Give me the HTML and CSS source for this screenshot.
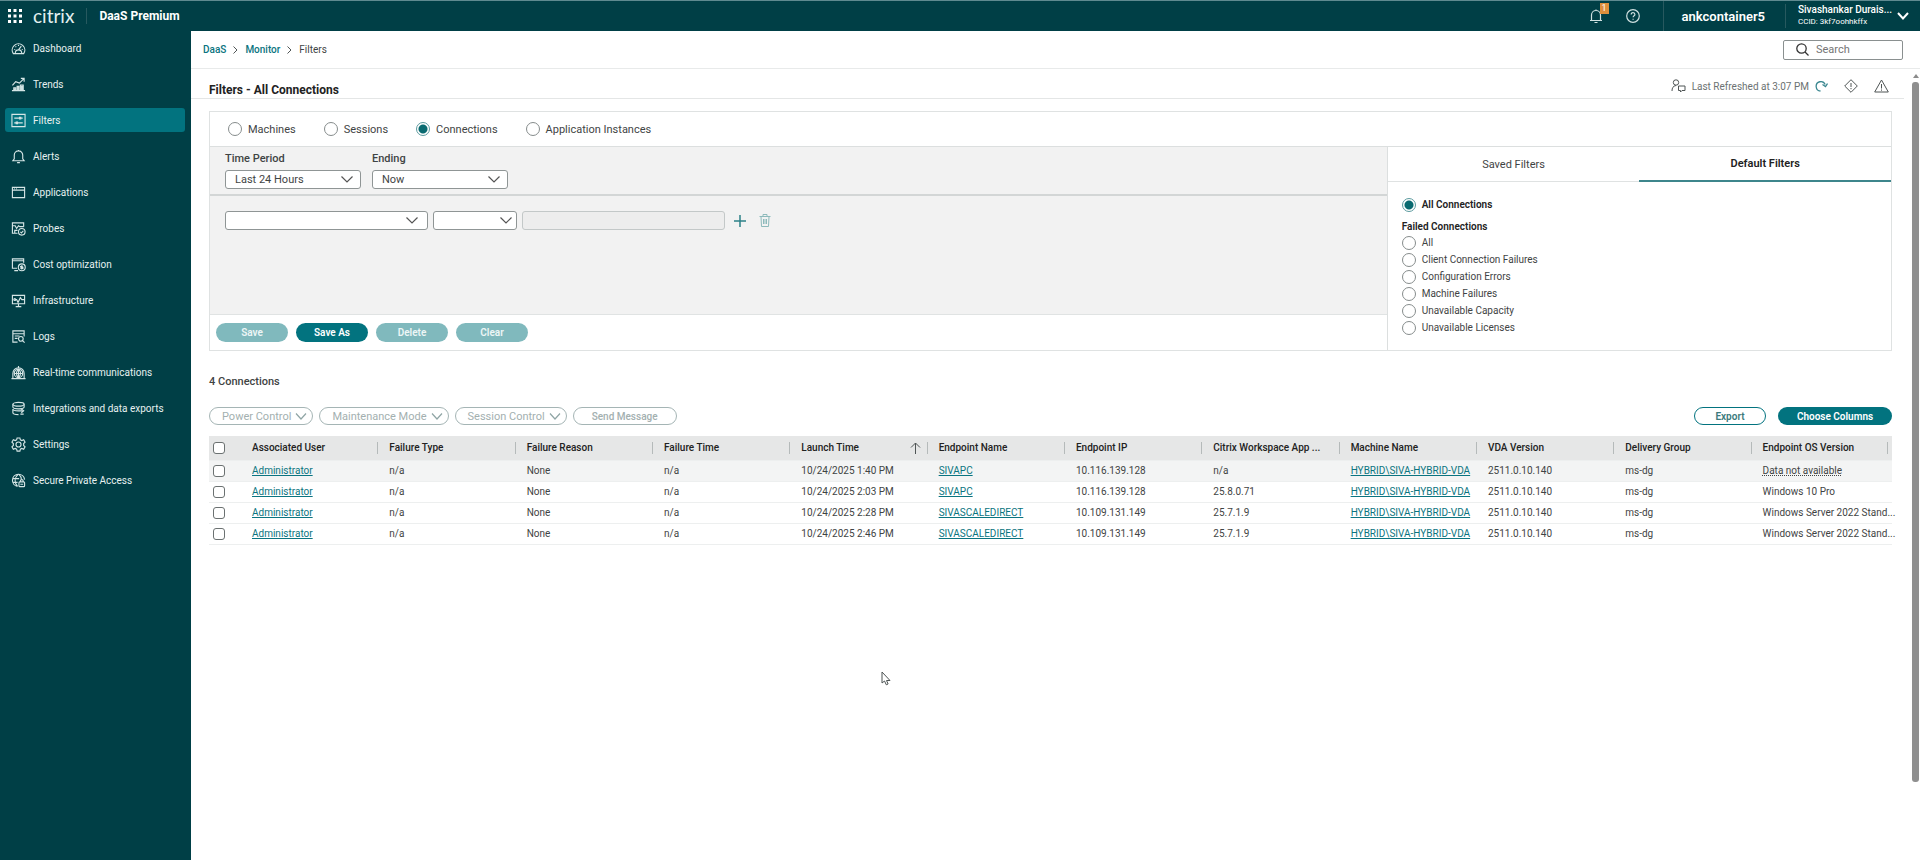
FILE: index.html
```html
<!DOCTYPE html>
<html lang="en">
<head>
  <meta charset="UTF-8" />
  <meta name="viewport" content="width=device-width, initial-scale=1.0"/>
  <title>DaaS Premium - Filters</title>
  <link rel="stylesheet" href="styles.css">
</head>
<body>

  <header class="topbar">
    <button class="icon-btn apps" aria-label="Apps">
      <svg width="14" height="14" viewBox="0 0 14 14" fill="#fff"><path d="M0 0h3v3H0zM5.500 0h3v3h-3zM11 0h3v3h-3zM0 5.500h3v3H0zM5.500 5.500h3v3h-3zM11 5.500h3v3h-3zM0 11h3v3H0zM5.500 11h3v3h-3zM11 11h3v3h-3z"/></svg>
    </button>
    <a class="logo" href="#">citrix</a>
    <span class="product">DaaS Premium</span>
    <div class="topbar-right">
      <button class="icon-btn bell" aria-label="Notifications">
        <svg class="line" width="14" height="15" viewBox="0 0 14 15"><path d="M1 11.500h12M2.500 11.500V6a4.500 4.500 0 0 1 9 0v5.500M7 1.500V.5M5.500 13.500h3"/></svg>
        <span class="badge">1</span>
      </button>
      <button class="icon-btn help" aria-label="Help">
        <svg class="line" width="14" height="14" viewBox="0 0 14 14"><circle cx="7" cy="7" r="6.300"/><path d="M5.200 5.400c0-2.500 3.700-2.300 3.700 0 0 1.300-1.800 1.400-1.800 2.900M7.100 9.700v1.100"/></svg>
      </button>
      <span class="tenant">ankcontainer5</span>
      <div class="account">
        <span class="account-name">Sivashankar Durais...</span>
        <span class="account-id">CCID: 3kf7oohhkffx</span>
      </div>
      <button class="icon-btn" aria-label="Account menu">
        <svg class="line thick" width="12" height="8" viewBox="0 0 12 8"><path d="M1 1l5 5.500L11 1"/></svg>
      </button>
    </div>
  </header>

  <div class="layout">
    <nav class="sidebar">
      <a href="#"><svg viewBox="0 0 16 16"><path d="M2.500 13.500a6.700 6.700 0 1 1 11 0zM4.500 13.500c0-3 1.500-4 3.500-4s3.500 1 3.500 4M8 9.500l3-4M3.500 9h1M8 4v1.200M4.800 5.800l.8.8M12.500 9h-1"/></svg>Dashboard</a>
      <a href="#"><svg viewBox="0 0 16 16"><path d="M1 14.500h14M3 14v-2.500h2V14M6.500 14v-4h2v4M10 14V8.500h3V14M1.500 9l3.500-4 4 1.500L14 1.500M10.500 1.500H14V5"/><path class="solid" d="M3 12h2v2H3zM6.500 10h2v4h-2zM10.500 9H13v5h-2.500z"/></svg>Trends</a>
      <a href="#" class="active"><svg viewBox="0 0 16 16"><path d="M1 1.500h14v13H1zM3.500 5.500h9M3.500 10.500h9"/><path class="solid" d="M8.500 4h2.500v3H8.500zM5 9h2.500v3H5z"/></svg>Filters</a>
      <a href="#"><svg viewBox="0 0 16 16"><path d="M2 12.500h12L12.500 10.500V6.500a4.500 4.500 0 0 0-9 0v4zM8 2V1M6.500 14.500h3"/></svg>Alerts</a>
      <a href="#"><svg viewBox="0 0 16 16"><path d="M1.500 2.500h13v11h-13zM1.500 5.500h13M3.500 4h.8M5.500 4h.8"/></svg>Applications</a>
      <a href="#"><svg viewBox="0 0 16 16"><path d="M7 13H1.500V2h12v4M1.500 5h3l1.500 3 2-3 1.500 1h4M4 13v-3h3"/><circle cx="11.500" cy="11.500" r="3.500"/><path d="M10 11.500l1.200 1.200 2-2.300"/></svg>Probes</a>
      <a href="#"><svg viewBox="0 0 16 16"><path d="M6.500 12H1.500V2h12v4M1.500 4h12M3.500 14.500h4"/><circle cx="11.500" cy="11" r="3.700"/><path d="M13 9.800h-2.200c-1 0-1 1.200 0 1.200h1.300c1 0 1 1.300 0 1.300H10M11.500 8.800v4.500"/></svg>Cost optimization</a>
      <a href="#"><svg viewBox="0 0 16 16"><path d="M4 11.500H1.500v-9h13v9H12M4 7h2l1.500 3 2.500-5 1.500 2H14M8 11v3M5 14.500h6M4 11.500h8"/><circle cx="4" cy="7" r="1"/></svg>Infrastructure</a>
      <a href="#"><svg viewBox="0 0 16 16"><path d="M7 14H2V2h12v6M2 5h12M4 7.500h5M4 10h3"/><circle cx="10.500" cy="10.500" r="2.500"/><path d="M12.300 12.300l2.200 2.200"/></svg>Logs</a>
      <a href="#"><svg viewBox="0 0 16 16"><circle cx="8" cy="9" r="4.500"/><path d="M3.500 9h9M8 4.500v9M8 4.500c-3 3-3 6 0 9M8 4.500c3 3 3 6 0 9M8 1v2M2 14.500V9a6 6 0 0 1 12 0v5.500M.5 14.500h15"/></svg>Real-time communications</a>
      <a href="#"><svg viewBox="0 0 16 16"><ellipse cx="8" cy="3.500" rx="6" ry="2"/><path d="M2 3.500v3c0 2.500 12 2.500 12 0v-3M2 8.500v4c0 1.500 3 2 6 2M2 8.500c0 2 4 2 6 2h4M11 8.500l2.500 2-2.500 2M13.500 14H10"/></svg>Integrations and data exports</a>
      <a href="#"><svg viewBox="0 0 16 16"><path d="M6.500 1h3l.5 2 1.500.8 2-.8 1.500 2.600L13.500 7v2l1.500 1.400-1.500 2.600-2-.8-1.500.8-.5 2h-3L6 13l-1.500-.8-2 .8L1 10.400 2.500 9V7L1 5.600 2.500 3l2 .8L6 3z"/><circle cx="8" cy="8" r="2.700"/></svg>Settings</a>
      <a href="#"><svg viewBox="0 0 16 16"><path d="M7 14.300A6.500 6.500 0 1 1 14.500 7M1.700 6h7M1.700 10H7M7.500 1.500c-4 4-4 9-.5 12.800M8.500 1.500c1.500 1.500 2.500 3 2.500 5"/><rect x="8.500" y="9.500" width="6" height="5" rx="1"/><path d="M10 9.500V8.500a1.500 1.500 0 0 1 3 0v1M10 12h3"/></svg>Secure Private Access</a>
    </nav>

    <main class="main">
      <div class="crumb-bar">
        <div class="crumbs">
          <a href="#">DaaS</a>
          <svg width="5" height="8" viewBox="0 0 5 8"><path d="M.5.5L4 4 .5 7.500"/></svg>
          <a href="#">Monitor</a>
          <svg width="5" height="8" viewBox="0 0 5 8"><path d="M.5.5L4 4 .5 7.500"/></svg>
          <span>Filters</span>
        </div>
        <label class="search">
          <svg width="13" height="13" viewBox="0 0 13 13"><circle cx="5.500" cy="5.500" r="4.700"/><path d="M9 9l3.500 3.500"/></svg>
          <input type="text" placeholder="Search" aria-label="Search">
        </label>
      </div>

      <div class="view">
        <div class="content">
          <div class="title-row">
            <h1>Filters - All Connections</h1>
            <div class="refresh">
              <svg width="15" height="14" viewBox="0 0 15 14"><circle cx="5" cy="3.500" r="2.700"/><path d="M1 12c0-3 1-5 4-5.500M7.500 7h6.500v4.500h-3L9.500 13v-1.500h-2z"/></svg>
              <span>Last Refreshed at 3:07 PM</span>
              <svg class="teal" width="13" height="12" viewBox="0 0 13 12"><path d="M5.500 11a4.700 4.700 0 1 1 4.700-6.500M12.500 3.500l-2 3-3-2"/></svg>
              <svg width="14" height="14" viewBox="0 0 14 14"><path d="M7 .7L13.300 7 7 13.300.7 7zM7 4v4M7 9v1.200"/></svg>
              <svg width="15" height="14" viewBox="0 0 15 14"><path d="M7.500 1L14.300 13H.7zM7.500 5v4.500M7.500 10.500v1.200"/></svg>
            </div>
          </div>

          <section class="filter-panel">
            <div class="types">
              <label><input type="radio" name="type">Machines</label>
              <label><input type="radio" name="type">Sessions</label>
              <label><input type="radio" name="type" checked>Connections</label>
              <label><input type="radio" name="type">Application Instances</label>
            </div>
            <div class="panel-body">
              <div class="builder">
                <div class="period">
                  <div class="field">
                    <label for="period">Time Period</label>
                    <select id="period"><option>Last 24 Hours</option></select>
                  </div>
                  <div class="field">
                    <label for="ending">Ending</label>
                    <select id="ending"><option>Now</option></select>
                  </div>
                </div>
                <div class="conditions">
                  <select class="wide" aria-label="Filter field"><option></option></select>
                  <select class="narrow" aria-label="Operator"><option></option></select>
                  <input type="text" class="wide" aria-label="Value" disabled>
                  <button class="icon-btn add" aria-label="Add condition">
                    <svg width="12" height="12" viewBox="0 0 12 12"><path d="M6 0v12M0 6h12"/></svg>
                  </button>
                  <button class="icon-btn remove" aria-label="Remove condition">
                    <svg width="12" height="13" viewBox="0 0 12 13"><path d="M.5 2.500h11M4 2.500v-2h4v2M2 2.500l.5 10h7l.5-10M4.500 5v5M6 5v5M7.500 5v5"/></svg>
                  </button>
                </div>
                <div class="builder-actions">
                  <button class="btn" disabled>Save</button>
                  <button class="btn">Save As</button>
                  <button class="btn" disabled>Delete</button>
                  <button class="btn" disabled>Clear</button>
                </div>
              </div>
              <div class="saved">
                <div class="tabs">
                  <button>Saved Filters</button>
                  <button class="active">Default Filters</button>
                </div>
                <div class="filter-list">
                  <label class="strong"><input type="radio" name="default" checked>All Connections</label>
                  <h3>Failed Connections</h3>
                  <label><input type="radio" name="default">All</label>
                  <label><input type="radio" name="default">Client Connection Failures</label>
                  <label><input type="radio" name="default">Configuration Errors</label>
                  <label><input type="radio" name="default">Machine Failures</label>
                  <label><input type="radio" name="default">Unavailable Capacity</label>
                  <label><input type="radio" name="default">Unavailable Licenses</label>
                </div>
              </div>
            </div>
          </section>

          <h2>4 Connections</h2>

          <div class="toolbar">
            <button class="pill" disabled>Power Control <svg width="12" height="7" viewBox="0 0 12 7"><path d="M1 .5l5 5.500 5-5.500"/></svg></button>
            <button class="pill" disabled>Maintenance Mode <svg width="12" height="7" viewBox="0 0 12 7"><path d="M1 .5l5 5.500 5-5.500"/></svg></button>
            <button class="pill" disabled>Session Control <svg width="12" height="7" viewBox="0 0 12 7"><path d="M1 .5l5 5.500 5-5.500"/></svg></button>
            <button class="pill plain" disabled>Send Message</button>
            <div class="toolbar-right">
              <button class="btn outline">Export</button>
              <button class="btn choose">Choose Columns</button>
            </div>
          </div>

          <table class="grid">
            <thead>
              <tr>
                <th class="check"><input type="checkbox" aria-label="Select all"></th>
                <th>Associated User</th>
                <th>Failure Type</th>
                <th>Failure Reason</th>
                <th>Failure Time</th>
                <th><div class="sorted">Launch Time <svg width="11" height="12" viewBox="0 0 11 12"><path d="M5.500 12V1M1 5.500L5.500 1 10 5.500"/></svg></div></th>
                <th>Endpoint Name</th>
                <th>Endpoint IP</th>
                <th>Citrix Workspace App ...</th>
                <th>Machine Name</th>
                <th>VDA Version</th>
                <th>Delivery Group</th>
                <th class="last">Endpoint OS Version</th>
              </tr>
            </thead>
            <tbody>
              <tr class="hover">
                <td class="check"><input type="checkbox" aria-label="Select row 1"></td>
                <td><a href="#">Administrator</a></td><td>n/a</td><td>None</td><td>n/a</td>
                <td>10/24/2025 1:40 PM</td><td><a href="#">SIVAPC</a></td><td>10.116.139.128</td><td>n/a</td>
                <td><a href="#">HYBRID\SIVA-HYBRID-VDA</a></td><td>2511.0.10.140</td><td>ms-dg</td><td><span class="missing">Data not available</span></td>
              </tr>
              <tr>
                <td class="check"><input type="checkbox" aria-label="Select row 2"></td>
                <td><a href="#">Administrator</a></td><td>n/a</td><td>None</td><td>n/a</td>
                <td>10/24/2025 2:03 PM</td><td><a href="#">SIVAPC</a></td><td>10.116.139.128</td><td>25.8.0.71</td>
                <td><a href="#">HYBRID\SIVA-HYBRID-VDA</a></td><td>2511.0.10.140</td><td>ms-dg</td><td>Windows 10 Pro</td>
              </tr>
              <tr>
                <td class="check"><input type="checkbox" aria-label="Select row 3"></td>
                <td><a href="#">Administrator</a></td><td>n/a</td><td>None</td><td>n/a</td>
                <td>10/24/2025 2:28 PM</td><td><a href="#">SIVASCALEDIRECT</a></td><td>10.109.131.149</td><td>25.7.1.9</td>
                <td><a href="#">HYBRID\SIVA-HYBRID-VDA</a></td><td>2511.0.10.140</td><td>ms-dg</td><td>Windows Server 2022 Stand...</td>
              </tr>
              <tr>
                <td class="check"><input type="checkbox" aria-label="Select row 4"></td>
                <td><a href="#">Administrator</a></td><td>n/a</td><td>None</td><td>n/a</td>
                <td>10/24/2025 2:46 PM</td><td><a href="#">SIVASCALEDIRECT</a></td><td>10.109.131.149</td><td>25.7.1.9</td>
                <td><a href="#">HYBRID\SIVA-HYBRID-VDA</a></td><td>2511.0.10.140</td><td>ms-dg</td><td>Windows Server 2022 Stand...</td>
              </tr>
            </tbody>
          </table>
        </div>
        <div class="scrollbar">
          <svg width="6" height="4" viewBox="0 0 6 4"><path d="M0 4l3-4 3 4z"/></svg>
          <div class="thumb"></div>
        </div>
      </div>
    </main>
  </div>

  <svg class="cursor" width="10" height="15" viewBox="0 0 10 15"><path d="M1 1v11l2.500-2 1.800 3.800 1.800-.8L5.500 9.500H9z"/></svg>

</body>
</html>
```
FILE: styles.css
```css
* {
  box-sizing: border-box;
}

body {
  margin: 0;
  min-height: 100vh;
  display: flex;
  flex-direction: column;
  font-family: Roboto, "Liberation Sans", sans-serif;
  font-size: 11px;
  color: #3f4444;
  background: #fff;
}

button, input, select {
  font: inherit;
  color: inherit;
}

a {
  color: #0a7480;
  text-decoration: none;
}

svg {
  display: block;
  flex: none;
  fill: none;
  stroke: #4f5555;
}

.icon-btn {
  border: 0;
  padding: 0;
  background: none;
  display: flex;
  position: relative;
}

/* top bar */
.topbar {
  height: 31px;
  display: flex;
  align-items: center;
  background: #003f46;
  border-top: 1px solid #5f8a90;
  color: #fff;
  padding: 0 11px 0 8px;
}

.apps svg {
  fill: #fff;
  stroke: none;
}

.logo {
  color: #e4f0f0;
  font-family: Lato, sans-serif;
  font-size: 19px;
  line-height: 28px;
  font-weight: 400;
  margin-left: 11px;
  padding-right: 12px;
}

.product {
  font-size: 12px;
  font-weight: 700;
  line-height: 16px;
  padding-left: 12px;
  border-left: 1px solid #27595f;
}

.topbar-right {
  display: flex;
  align-items: center;
  align-self: stretch;
  margin-left: auto;
}

.line {
  stroke: #cfe0e0;
  stroke-width: 1.2;
}

.line.thick {
  stroke: #fff;
  stroke-width: 2;
}

.badge {
  position: absolute;
  left: 11px;
  top: -6px;
  width: 9px;
  font-size: 9px;
  line-height: 11px;
  text-align: center;
  color: #fff;
  background: #dd8f3d;
}

.help {
  margin: 0 23px;
}

.tenant {
  display: flex;
  align-items: center;
  align-self: stretch;
  border-left: 1px solid #27595f;
  padding: 0 20px 0 18px;
  font-size: 13px;
  font-weight: 600;
}

.account {
  display: flex;
  flex-direction: column;
  width: 112px;
  padding-left: 12px;
  border-left: 1px solid #27595f;
}

.account-name {
  font-size: 10px;
  line-height: 12px;
  font-weight: 500;
}

.account-id {
  font-size: 8px;
  line-height: 12px;
}

/* layout */
.layout {
  flex: 1;
  display: flex;
}

.sidebar {
  width: 191px;
  flex: none;
  background: #003f46;
  padding: 5px 5px 0;
  display: flex;
  flex-direction: column;
  gap: 12px;
}

.sidebar a {
  display: flex;
  align-items: center;
  gap: 7px;
  height: 24px;
  width: 180px;
  padding-left: 6px;
  border-radius: 3px;
  font-size: 10px;
  color: #e6f0f0;
  white-space: nowrap;
}

.sidebar a.active {
  background: #02737f;
}

.sidebar svg {
  width: 15px;
  height: 15px;
  stroke: #d5e6e6;
  stroke-width: 1.2;
}

.sidebar .solid {
  fill: #cfe2e2;
  stroke: none;
}

.main {
  flex: 1;
  min-width: 0;
  display: flex;
  flex-direction: column;
}

.crumb-bar {
  display: flex;
  align-items: center;
  justify-content: space-between;
  height: 38px;
  padding: 0 17px 0 12px;
  border-bottom: 1px solid #e8eaea;
}

.crumbs {
  display: flex;
  align-items: center;
  gap: 7px;
  font-size: 10px;
}

.crumbs a {
  font-weight: 500;
}

.search {
  display: flex;
  align-items: center;
  gap: 7px;
  width: 120px;
  height: 20px;
  padding: 0 12px;
  border: 1px solid #8a9090;
  border-radius: 2px;
}

.search svg {
  stroke: #333;
  stroke-width: 1.3;
}

.search input {
  width: 100%;
  min-width: 0;
  border: 0;
  padding: 0;
  outline: 0;
  background: none;
}

.view {
  flex: 1;
  display: flex;
}

.content {
  flex: 1;
  min-width: 0;
  padding-right: 19px;
}

.title-row {
  display: flex;
  justify-content: space-between;
  height: 30px;
  margin-right: -12px;
  padding-left: 18px;
  border-bottom: 1px solid #e4e6e6;
}

h1 {
  margin: 0;
  padding-top: 13px;
  font-size: 12px;
  line-height: 16px;
  font-weight: 700;
  color: #222;
}

.refresh {
  display: flex;
  align-items: center;
  gap: 6px;
  height: 34px;
  padding-right: 15px;
  font-size: 10px;
  color: #6c7272;
}

.refresh svg + svg {
  margin-left: 10px;
}

.refresh .teal {
  stroke: #3a8790;
  stroke-width: 1.3;
}

/* filter panel */
.filter-panel {
  margin: 12px 0 0 18px;
  border: 1px solid #dfe2e2;
}

input[type="radio"] {
  appearance: none;
  flex: none;
  width: 14px;
  height: 14px;
  margin: 0 6px 0 0;
  border: 1px solid #868c8c;
  border-radius: 50%;
}

input[type="radio"]:checked {
  border-color: #5b9a9e;
  background: radial-gradient(circle, #0a6a70 4px, #fff 5px);
}

.types {
  display: flex;
  gap: 28px;
  height: 34px;
  padding-left: 18px;
}

.types label, .filter-list label {
  display: flex;
  align-items: center;
}

.panel-body {
  display: grid;
  grid-template-columns: 7fr 3fr;
  border-top: 1px solid #dcdfdf;
}

.period {
  display: flex;
  gap: 11px;
  padding: 4px 0 4px 15px;
  height: 49px;
  background: #f2f2f2;
  border-bottom: 2px solid #d3d6d6;
}

.field {
  width: 136px;
}

.field label {
  display: block;
  font-weight: 500;
  line-height: 16px;
  margin-bottom: 3px;
}

select, .conditions input {
  appearance: none;
  height: 19px;
  padding: 0 9px;
  border: 1px solid #8f9595;
  border-radius: 3px;
  background: #fff url("data:image/svg+xml,%3Csvg xmlns='http://www.w3.org/2000/svg' width='12' height='7' viewBox='0 0 12 7' fill='none' stroke='%23555' stroke-width='1.2'%3E%3Cpath d='M.5.5L6 6 11.500.5'/%3E%3C/svg%3E") no-repeat right 7px center;
}

.field select {
  width: 100%;
}

.conditions {
  display: flex;
  align-items: center;
  gap: 5px;
  padding: 15px 15px 84px;
  background: #f2f2f2;
  border-bottom: 1px solid #e0e3e3;
}

.conditions .wide {
  width: 203px;
}

.conditions .narrow {
  width: 84px;
}

.conditions select.wide {
  background-position: right 9px center;
}

.conditions .narrow {
  background-position: right 4px center;
}

.conditions input:disabled {
  background: #ededed;
  border-color: #c3c8c8;
}

.add {
  margin-left: 4px;
}

.remove {
  margin-left: 8px;
}

.add svg {
  stroke: #2c8188;
  stroke-width: 1.5;
}

.remove svg {
  stroke: #8dbabb;
}

.builder-actions {
  display: flex;
  gap: 8px;
  padding: 8px 6px;
}

.btn {
  height: 18px;
  width: 72px;
  padding: 0;
  border: 0;
  border-radius: 9px;
  background: #02737f;
  color: #fff;
  font-size: 10px;
  font-weight: 600;
}

.builder-actions .btn {
  height: 19px;
  border-radius: 10px;
}

.btn:disabled {
  background: #80b9bd;
  color: #edf6f6;
}

.btn.outline {
  border: 1px solid #02737f;
  background: #fff;
  color: #3b7a7c;
}

.btn.choose {
  width: 114px;
}

.saved {
  border-left: 1px solid #dcdfdf;
}

.tabs {
  display: flex;
}

.tabs button {
  flex: 1;
  height: 35px;
  padding: 0;
  border: 0;
  border-bottom: 1px solid #dfe2e2;
  background: none;
}

.tabs .active {
  border-bottom: 2px solid #3e868c;
  font-weight: 600;
  color: #222;
}

.filter-list {
  padding: 14px;
  font-size: 10px;
}

.filter-list label {
  height: 17px;
}

.filter-list .strong, .filter-list h3 {
  font-weight: 600;
  color: #222;
}

.filter-list h3 {
  margin: 7px 0 0;
  font-size: 10px;
  line-height: 14px;
}

/* connections */
h2 {
  margin: 24px 0 18px 18px;
  font-size: 11px;
  line-height: 14px;
  font-weight: 500;
}

.toolbar {
  display: flex;
  gap: 6px;
  margin: 0 0 11px 18px;
}

.pill {
  display: flex;
  align-items: center;
  gap: 4px;
  height: 18px;
  padding: 0 5px 0 12px;
  border: 1px solid #a5b5b5;
  border-radius: 9px;
  background: none;
  color: #a3b0b0;
}

.pill.plain {
  padding: 0 18px;
  font-size: 10px;
  font-weight: 500;
}

.pill svg {
  stroke: #8fa5a5;
  stroke-width: 1.2;
}

.toolbar-right {
  display: flex;
  gap: 12px;
  margin-left: auto;
}

.grid {
  width: calc(100% - 18px);
  margin-left: 18px;
  table-layout: fixed;
  border-collapse: collapse;
  font-size: 10px;
  white-space: nowrap;
}

.grid th, .grid td {
  height: 21px;
  padding: 0 0 0 11px;
  text-align: left;
  border-bottom: 1px solid #edefef;
}

.grid th {
  position: relative;
  width: 8.16%;
  height: 24px;
  background: #e6e7e7;
  font-weight: 500;
  color: #222;
}

.grid th::after {
  content: "";
  position: absolute;
  right: 0;
  top: 6px;
  width: 1px;
  height: 12px;
  background: #b5baba;
}

.grid th.check::after {
  display: none;
}

.grid th.last {
  width: auto;
}

.grid th.last::after {
  right: 4px;
}

.grid .check {
  width: 32px;
  padding: 0 0 0 4px;
}

.grid input {
  appearance: none;
  display: block;
  width: 12px;
  height: 12px;
  margin: 0;
  border: 1px solid #6b7171;
  border-radius: 3px;
  background: #fff;
}

.grid a {
  text-decoration: underline;
}

.grid .hover td {
  background: #f3f4f4;
}

.missing {
  text-decoration: underline dotted;
}

.sorted {
  display: flex;
  align-items: center;
  justify-content: space-between;
  padding-right: 7px;
}

.scrollbar {
  display: flex;
  flex-direction: column;
  align-items: center;
  gap: 4px;
  width: 9px;
  padding-top: 5px;
}

.scrollbar path {
  fill: #8b8b8b;
  stroke: none;
}

.thumb {
  width: 7px;
  height: 89%;
  border-radius: 3px;
  background: #8f8f8f;
}

.cursor {
  position: absolute;
  left: 881px;
  top: 671px;
  fill: #fff;
}
```
